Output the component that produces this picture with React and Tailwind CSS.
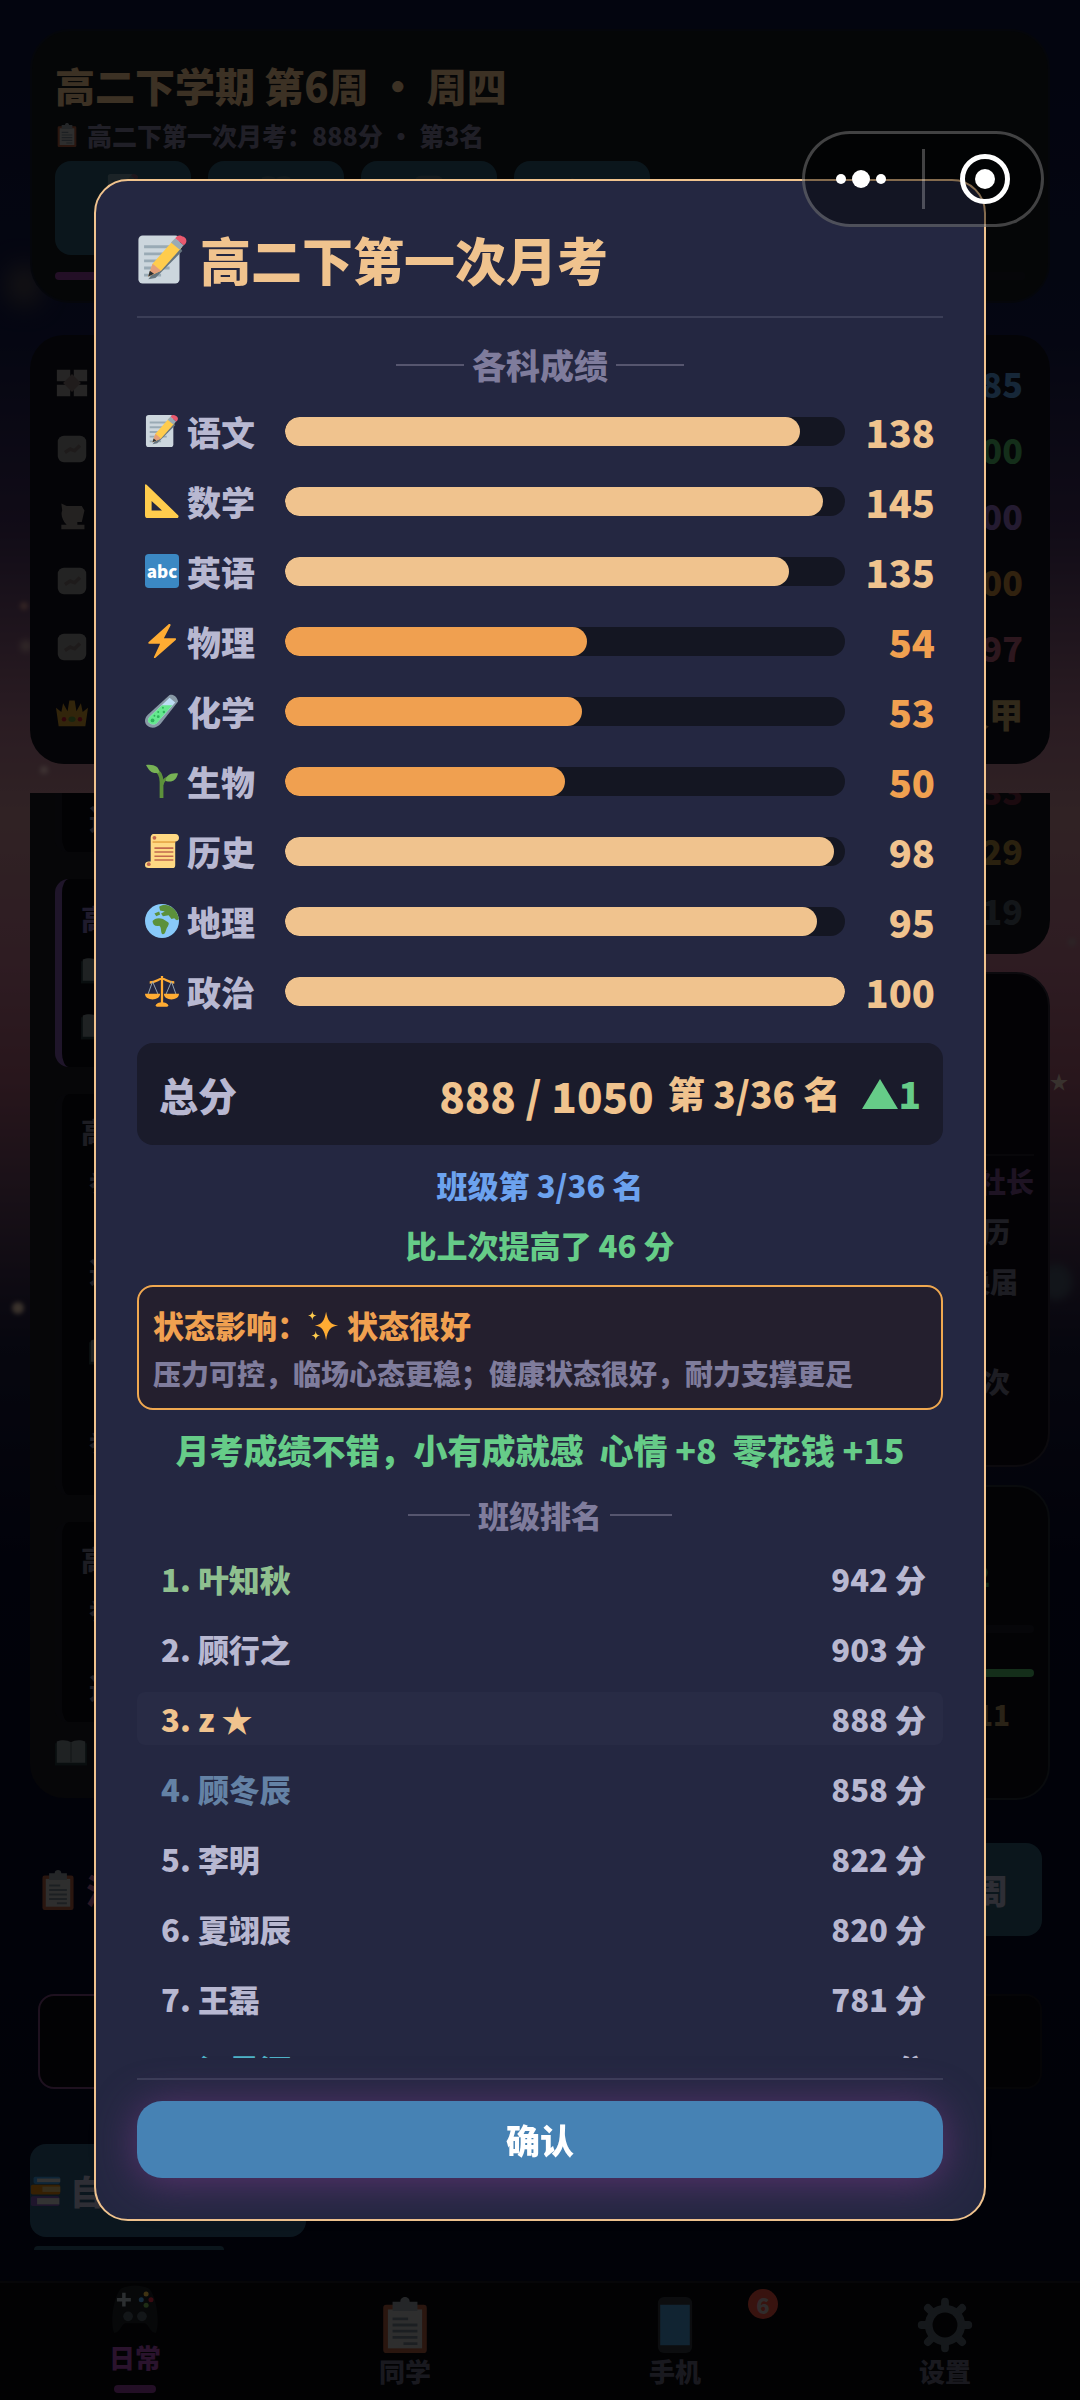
import React from 'react';

const subjects = [
  { icon: 'memo', name: '语文', score: 138, full: 150 },
  { icon: 'ruler', name: '数学', score: 145, full: 150 },
  { icon: 'abc', name: '英语', score: 135, full: 150 },
  { icon: 'bolt', name: '物理', score: 54, full: 100 },
  { icon: 'tube', name: '化学', score: 53, full: 100 },
  { icon: 'sprout', name: '生物', score: 50, full: 100 },
  { icon: 'scroll', name: '历史', score: 98, full: 100 },
  { icon: 'globe', name: '地理', score: 95, full: 100 },
  { icon: 'scales', name: '政治', score: 100, full: 100 },
];

const ranking = [
  { name: '叶知秋', score: 942, color: 'text-[#8fc08f]' },
  { name: '顾行之', score: 903, color: 'text-[#b8b8d1]' },
  { name: 'z ★', score: 888, color: 'text-[#f0c38e]', me: true },
  { name: '顾冬辰', score: 858, color: 'text-[#6482a5]' },
  { name: '李明', score: 822, color: 'text-[#b8b8d1]' },
  { name: '夏翊辰', score: 820, color: 'text-[#b8b8d1]' },
  { name: '王磊', score: 781, color: 'text-[#b8b8d1]' },
  { name: '江景河', score: 768, color: 'text-[#4fb3c8]' },
];

const stats = [
  { icon: 'puzzle', value: '85', color: 'text-[#5a9be0]' },
  { icon: 'card', value: '100', color: 'text-[#4fb868]' },
  { icon: 'cup', value: '100', color: 'text-[#8f6cc4]' },
  { icon: 'card', value: '100', color: 'text-[#c4883c]' },
  { icon: 'card', value: '97', color: 'text-[#b45c78]' },
  { icon: 'crown', value: '路人甲', color: 'text-[#c4a468]' },
];

const icons = {
  memo: (
    <>
      <rect x="1" y="1" width="29" height="34" rx="3" fill="#ccd6dd" />
      <path d="M5 9h20M5 14h20M5 19h19M5 24h18M5 29h12" stroke="#99aab5" strokeWidth="2" />
      <path d="M8 32l5-1L32 12l-2-3-19 19z" fill="#66757f" />
      <path d="M8 30l3-9L26 4l6 5-15 17z" fill="#ffcc4d" />
      <path d="M8 30l3-9 6 5z" fill="#e39f7c" />
      <path d="M8 30l1-4 3 2z" fill="#292f33" />
      <path d="M24 6l3-3 6 5-3 3z" fill="#99aab5" />
      <path d="M27 3c2-3 4-2 6-1s3 4 0 6z" fill="#ea596e" />
    </>
  ),
  ruler: <path fillRule="evenodd" fill="#ffcc4d" d="M0 1.500C0 0 1 0 2 1l33 32c1 1 .5 3-1 3H3c-2 0-3-1-3-3zM7 18v10h11z" />,
  abc: (
    <>
      <rect width="36" height="36" rx="4" fill="#3b88c3" />
      <text x="18" y="25" textAnchor="middle" fontSize="18" fill="#fff">abc</text>
    </>
  ),
  bolt: <path d="M26.500 0c-.4-.3-1-.2-1.500.3L4 19c-1 1-.6 2 .5 2H16l-6.500 14c-.4 1 .8 1.500 1.600.7L32.500 17c.8-.9.4-2-.7-2H20L27 1.500c.3-.5 0-1.200-.5-1.500z" fill="#ffac33" />,
  tube: (
    <>
      <path d="M26 1c4-1 8 2 9 7L17 31c-4 5-10 6-14 3S-1 26 3 22z" fill="#8899a6" />
      <path d="M26 4l6 5-18 20c-3 4-6 4-9 2s-2-5 1-8z" fill="#bdddf4" />
      <path d="M18 12l11 0L14 29c-3 4-6 4-9 2s-2-5 1-8z" fill="#66e88f" />
      <g fill="#2cb35a">
        <circle cx="8" cy="28" r="2" /><circle cx="14" cy="24" r="1.500" /><circle cx="14" cy="19" r="1" />
        <circle cx="20" cy="19" r="1.300" /><circle cx="19" cy="14.500" r="1" /><circle cx="10" cy="23" r="1" />
      </g>
    </>
  ),
  sprout: (
    <>
      <path d="M17.500 36V19c0-7-2-11-7-13" fill="none" stroke="#5c913b" strokeWidth="4" />
      <path d="M18 22c1-4 4-7 8-8" fill="none" stroke="#5c913b" strokeWidth="3" />
      <path d="M1 1c9-1 14 2 14 8-7 2-10-1-14-8z" fill="#77b255" />
      <path d="M35 10c-9-1-13 3-13 8 7 2 11-1 13-8z" fill="#77b255" />
    </>
  ),
  scroll: (
    <>
      <path d="M9 0h23c3 0 4 2 4 4s-1 4-4 4v25c0 2-1 3-3 3H4c-3 0-4-1-4-3.500S2 29 4 29h2V4c0-2 1-4 3-4z" fill="#ffd983" />
      <path d="M8 8.500h24" stroke="#e39f3d" strokeWidth="1.500" />
      <circle cx="10" cy="4" r="2" fill="#c1694f" />
      <circle cx="4" cy="32" r="2" fill="#c1694f" />
      <path d="M10 15h20M10 19h20M10 23.500h20M10 27.500h20" stroke="#c1694f" strokeWidth="1.700" />
    </>
  ),
  globe: (
    <>
      <circle cx="18" cy="18" r="18" fill="#88c9f9" />
      <path d="M8 18c2-3 7-4 11-2l5 3c2 1 1 3 0 5-2 2-2 8-5 8s-1-8-4-9c-4 1-7-1-7-5zM15 3c3-3 8-2 11-1 6 3 9 8 10 14-2 2-3 1-5-1l-3 1-3-4-6 1-2-3 4-2-5-1zM10 10l5-2 1 3-4 2z" fill="#5c913b" />
    </>
  ),
  scales: (
    <>
      <path d="M18 2v31M12 33.500h12M5 9c7 0 9-4 13-4s6 4 13 4" stroke="#ffac33" strokeWidth="2.400" fill="none" />
      <path d="M8 8L3 22M8 8l6 14M28 8l-6 14M28 8l5 14" stroke="#99aab5" strokeWidth="1" />
      <path d="M0 21h16c0 4-4 6-8 6s-8-2-8-6zM20 21h16c0 4-4 6-8 6s-8-2-8-6zM11 34c1-3 4-4 7-4s6 1 7 4z" fill="#ffac33" />
    </>
  ),
  sparkles: (
    <>
      <path d="M21 2c2 11 5 15 14 16-9 1-12 5-14 17-2-12-5-16-13-17 8-1 11-5 13-16z" fill="#ffac33" />
      <path d="M5 1c.5 4 1.500 5 5 5.500-3.500.5-4.500 2-5 5.500-.5-3.500-1.500-5-5-5.500C3.500 6 4.500 5 5 1zM9 24c.5 4 1.500 5 5 5.500-3.500.5-4.500 2-5 5.500-.5-3.500-1.500-5-5-5.500 3.500-.5 4.500-1.500 5-5.500z" fill="#ffcc4d" />
    </>
  ),
  clipboard: (
    <>
      <rect x="4" y="5" width="28" height="31" rx="2" fill="#a8583c" />
      <rect x="7" y="8" width="22" height="25" fill="#b8b8b8" />
      <path d="M10 3h5c0-4 6-4 6 0h5v6H10z" fill="#90989f" />
      <path d="M10 14h10M10 18h16M10 22h16M10 26h16M17 30h9" stroke="#707c88" strokeWidth="1.800" />
    </>
  ),
  gamepad: (
    <>
      <path d="M3 36c-3-6-1-26 5-32 6-3 14-3 20 0 6 6 8 26 5 32-4 0-5-6-8-7H11c-3 1-4 7-8 7z" fill="#1c2024" />
      <path d="M10 7v10M5 12h10" stroke="#b0bcc4" strokeWidth="2.500" />
      <circle cx="13" cy="24" r="3.500" fill="#4c5862" />
      <circle cx="23" cy="24" r="3.500" fill="#4c5862" />
      <circle cx="26" cy="8" r="1.800" fill="#ffcc4d" /><circle cx="22.500" cy="12" r="1.800" fill="#55acee" />
      <circle cx="29.500" cy="12" r="1.800" fill="#dd2e44" /><circle cx="26" cy="16" r="1.800" fill="#77b255" />
    </>
  ),
  phone: (
    <>
      <rect x="7" y="0" width="22" height="36" rx="4" fill="#31373d" />
      <rect x="8.500" y="5" width="19" height="26" fill="#4690c8" />
    </>
  ),
  gear: (
    <>
      <g stroke="#55626c" strokeWidth="5" strokeLinecap="round">
        <path d="M18 3v30M3 18h30M7 7l22 22M29 7L7 29" />
      </g>
      <circle cx="18" cy="18" r="13" fill="#55626c" />
      <circle cx="18" cy="18" r="8" fill="#08080e" />
    </>
  ),
  books: (
    <>
      <rect x="4" y="2" width="30" height="8" rx="2" fill="#3b94d9" /><path d="M8 4h26v4H8z" fill="#ccc" />
      <rect x="1" y="11" width="33" height="11" rx="2" fill="#d8800c" /><path d="M14 13h20v6H14z" fill="#d8b870" />
      <rect x="1" y="24" width="32" height="11" rx="2" fill="#7c56b0" /><path d="M8 26h25v7H8z" fill="#ccc" />
    </>
  ),
  book: (
    <>
      <path d="M0 7h36v25H0z" fill="#24383c" />
      <path d="M2 5c5-2 12-2 16 1 4-3 11-3 16-1v24H2z" fill="#7c868c" />
      <path d="M18 6v23" stroke="#5c686e" strokeWidth="2" />
    </>
  ),
  crown: (
    <>
      <path d="M3 33L0 12l6 5 2-10 5 9 2-12h6l2 12 5-9 2 10 6-5-3 21z" fill="#c8922c" />
      <ellipse cx="18" cy="25" rx="4" ry="3" fill="#5c913b" />
      <circle cx="9" cy="25" r="2.500" fill="#be1931" /><circle cx="27" cy="25" r="2.500" fill="#be1931" />
    </>
  ),
  puzzle: (
    <>
      <path d="M1 3h15v13H1zM20 3h15v13H20zM1 20h15v13H1zM20 20h15v13H20z" fill="#989494" />
      <path d="M8 18L18 8l10 10-10 10z" fill="#807070" />
    </>
  ),
  card: (
    <>
      <rect x="2" y="3" width="32" height="30" rx="7" fill="#8c8c8c" />
      <path d="M10 22l6-4 5 2 6-6" stroke="#786c6c" strokeWidth="4" fill="none" />
    </>
  ),
  cup: <path d="M6 5l6 3h17l3 5-3 13h-5v3h8v5H6v-5h6c-5-5-7-12-5-16z" fill="#908884" />,
};

const Icon = ({ name, className }) => (
  <svg viewBox="0 0 36 36" className={className} aria-hidden="true">{icons[name]}</svg>
);

const SectionTitle = ({ children, className, line }) => (
  <h2 className={`flex items-center justify-center gap-2 text-[#7f7c9c] leading-[50px] ${className}`}>
    <span className={`h-0.5 bg-[#56566f] ${line}`}></span>
    {children}
    <span className={`h-0.5 bg-[#56566f] ${line}`}></span>
  </h2>
);

const TimelineItem = ({ active, children, className }) => (
  <div className={`flex flex-col rounded-[14px] border-l-[7px] bg-[#0a0a10] pl-[19px] text-[28px] text-[#75758a] ${active ? 'border-[#7d55a8]' : 'border-[#1b1b27]'} ${className}`}>
    {children}
  </div>
);

// night sky lights behind the cards
const Stars = () => (
  <div aria-hidden="true">
    <span className="absolute top-[265px] left-2 h-10 w-8 rounded-full bg-[#585050] blur-md"></span>
    <span className="absolute top-[602px] left-5 h-2 w-2 rounded-full bg-[#c88c8c] blur-[2px]"></span>
    <span className="absolute top-[640px] left-5 h-3 w-3 rounded-full bg-[#c09c9c] blur-[3px]"></span>
    <span className="absolute top-[766px] left-10 h-2 w-2 rounded-full bg-[#f0c8c8] blur-[2px]"></span>
    <span className="absolute top-[1302px] left-3 h-3 w-3 rounded-full bg-[#e8c8b0] blur-[2px]"></span>
    <span className="absolute top-[938px] right-1 h-2 w-2 rounded-full bg-[#b09098] blur-[2px]"></span>
    <span className="absolute top-[1072px] right-3 text-[18px] leading-none text-[#e0c8b8]">★</span>
    <span className="absolute top-[1264px] right-2 h-9 w-8 rounded-full bg-[#485468] blur-[4px]"></span>
  </div>
);

const Home = () => (
  <div className="relative flex min-h-screen flex-col bg-[linear-gradient(180deg,#0c143c_0%,#141a48_14%,#44305c_22%,#a87088_30%,#c08890_34%,#b87088_40%,#a05870_45%,#60405c_50%,#1c1c3c_56%,#040828_66%,#060820_100%)]">
    <Stars />
    <div className="relative flex flex-1 flex-col px-[30px] pt-[29px]">
      <header className="flex h-[274px] flex-col rounded-[40px] border-2 border-[#141a2c] bg-[#14181f] px-[23px] pt-6">
        <h1 className="text-[40px] leading-[60px] text-[#f0c38e]">高二下学期 第6周 ・ 周四</h1>
        <p className="flex items-center gap-2 text-[25px] leading-[40px] text-[#7f7c9c]">
          <Icon name="clipboard" className="h-6 w-6" />
          高二下第一次月考：888分 ・ 第3名
        </p>
        <div className="mt-1.5 flex gap-[17px]">
          {['memo', 'book', 'card', 'cup'].map((name) => (
            <button key={name} className="flex h-[94px] w-[136px] justify-center rounded-2xl bg-[#2c5a70] pt-3">
              <Icon name={name} className="h-8 w-8 opacity-40" />
            </button>
          ))}
        </div>
        <div className="mt-[17px] h-2 rounded-full bg-[#1b1b27]">
          <div className="h-2 w-2/5 rounded-full bg-[#8c3c96]"></div>
        </div>
      </header>

      <section className="mt-8 rounded-[34px] bg-[#12121c] pt-[15px] pr-[27px] pb-[18px] pl-[26px]">
        {stats.map((stat, i) => (
          <div key={i} className={`flex h-[66px] items-center justify-between text-[34px] ${stat.color}`}>
            <Icon name={stat.icon} className="h-8 w-8" />
            {stat.value}
          </div>
        ))}
      </section>

      <main className="mt-[29px] flex-1">
        <div className="grid grid-cols-2 items-start gap-4">
          <div className="flex flex-col gap-[27px] rounded-b-[34px] bg-[#181821] px-[25px] pb-[29px]">
            <TimelineItem className="h-[59px] rounded-t-none leading-[50px]"><p className="pl-2">选择了自习</p></TimelineItem>
            <TimelineItem active className="h-[188px] pt-[14px] leading-[50px]">
              <p className="text-[#7d6cb4]">高二下学期</p>
              <Icon name="book" className="my-3 h-8 w-8" />
              <Icon name="book" className="my-3 h-8 w-8" />
            </TimelineItem>
            <TimelineItem className="h-[401px] pt-3 leading-[50px]">
              <p>高二下学期</p>
              <p className="pl-2">参加活动</p>
              <p className="mt-10 pl-2">选择复习</p>
              <Icon name="book" className="mt-10 ml-2 h-8 w-8" />
              <p className="mt-12 pl-2">参加社团</p>
            </TimelineItem>
            <TimelineItem className="h-[200px] pt-3 leading-[50px]">
              <p>高二下学期</p>
              <p className="pl-2">参加活动</p>
              <p className="mt-7 pl-2">选择复习</p>
            </TimelineItem>
            <Icon name="book" className="-mt-3 h-8 w-8" />
          </div>

          <div className="flex flex-col gap-[18px] text-right text-[28px] text-[#75758a]">
            <section className="h-[161px] overflow-hidden rounded-b-[34px] bg-[#15151f] pr-[27px] text-[34px] leading-[60px]">
              <p className="-mt-8 text-[#6e283c]">33</p>
              <p className="text-[#a8843c]">29</p>
              <p className="text-[#4c5864]">19</p>
            </section>
            <section className="h-[495px] rounded-[34px] border-2 border-[#302a3a] bg-[#0e0a14] pt-[180px] pr-3.5 leading-[50px]">
              <div className="h-0.5 bg-[#221c28]"></div>
              <p className="text-[#784c8c]">副社长</p>
              <p className="pr-6">经历</p>
              <p className="pr-4">换届</p>
              <p className="mt-[50px] pr-6">一次</p>
            </section>
            <section className="h-[315px] rounded-[34px] border-2 border-[#242c36] bg-[#0c0e16] pt-[63px] pr-3.5">
              <p className="pr-11 leading-[50px] text-[#3c9c64]">2</p>
              <div className="mt-[25px] h-2 rounded-full bg-[#181a24]"></div>
              <div className="mt-9 h-2 rounded-full bg-[#4fb868]"></div>
              <p className="mt-4 pr-6 text-[#a88c5c]">11</p>
            </section>
          </div>
        </div>

        <div className="mt-[43px] flex items-center justify-between pr-2 pl-2">
          <p className="flex items-center gap-2 text-[34px] text-[#a85c8c]"><Icon name="clipboard" className="h-10 w-10" />活动安排</p>
          <button className="h-[93px] rounded-2xl bg-[#2c5a70] px-[34px] text-[34px] text-[#b8b8d1]">进入下一周</button>
        </div>
        <div className="mt-[58px] grid grid-cols-2 gap-4 px-2">
          <div className="h-[95px] rounded-2xl border-2 border-[#78447c] bg-[#0a0a10]"></div>
          <div className="h-[95px] rounded-2xl border-2 border-[#14141e] bg-[#0a0a10]"></div>
        </div>
        <button className="mt-[55px] flex h-[93px] w-[276px] items-center gap-2 rounded-2xl bg-[#2c5a78] text-[34px] text-[#b8b8d1]">
          <Icon name="books" className="h-8 w-8" />自习室
        </button>
        <div className="mt-[9px] ml-1 h-1 w-[190px] rounded-t-full bg-[#2c5a70]"></div>
      </main>
    </div>

    <nav className="relative mt-7 grid h-[119px] grid-cols-4 border-t-2 border-[#181822] bg-[#08080e] text-[26px] leading-[36px] text-[#66667c]">
      <a href="#daily" className="flex flex-col items-center text-[#a84cb4]">
        <Icon name="gamepad" className="mb-1.5 h-[50px] w-[56px]" />
        日常
        <span className="mt-2.5 h-2 w-[42px] rounded-full bg-[#8c3c96]"></span>
      </a>
      <a href="#classmates" className="flex flex-col items-center pt-[14px]">
        <Icon name="clipboard" className="h-14 w-14" />同学
      </a>
      <a href="#phone" className="relative flex flex-col items-center pt-[14px]">
        <Icon name="phone" className="h-14 w-14" />手机
        <span className="absolute top-1.5 right-8 h-[30px] w-[30px] rounded-full bg-[#e04c3c] text-center text-[22px] leading-[30px] text-[#c0b0b0]">6</span>
      </a>
      <a href="#settings" className="flex flex-col items-center pt-[14px]">
        <Icon name="gear" className="h-14 w-14" />设置
      </a>
    </nav>
  </div>
);

const ExamDialog = () => (
  <div className="fixed inset-0 flex items-center justify-center bg-black/75 px-[94px] py-[179px]">
    <div role="dialog" aria-labelledby="exam-title" className="flex max-h-full w-full flex-col rounded-[34px] border-2 border-[#f0c38e] bg-[#242741] p-[41px]">
      <h1 id="exam-title" className="flex items-center gap-3 border-b-2 border-[#3b3e57] pb-5 text-[51px] leading-[74px] text-[#f0c38e]">
        <Icon name="memo" className="h-[51px] w-[51px]" />
        高二下第一次月考
      </h1>

      <div className="min-h-0 flex-1 overflow-hidden">
        <SectionTitle className="mt-[22px] text-[34px]" line="w-[68px]">各科成绩</SectionTitle>
        <div className="mt-1.5">
          {subjects.map(({ icon, name, score, full }) => {
            const percent = Math.floor((score / full) * 100);
            const good = percent >= 60;
            return (
              <div key={name} className="flex h-[70px] items-center">
                <div className="flex w-[148px] items-center gap-2 pl-2 text-[34px] text-[#b8b8d1]">
                  <Icon name={icon} className="h-[34px] w-[34px]" />
                  {name}
                </div>
                <div className="h-[29px] flex-1 overflow-hidden rounded-full bg-[#141622]">
                  <div className={`h-full rounded-full ${good ? 'bg-[#f0c38e]' : 'bg-[#f0a050]'}`} style={{ width: `${percent}%` }}></div>
                </div>
                <div className={`w-[98px] pr-2 text-right text-[38px] ${good ? 'text-[#f0c38e]' : 'text-[#f0a050]'}`}>{score}</div>
              </div>
            );
          })}
        </div>

        <div className="mt-[17px] flex h-[102px] items-center justify-between rounded-2xl bg-[#1a1b2b] px-[22px]">
          <span className="text-[39px] text-[#b8b8d1]">总分</span>
          <div className="flex items-center text-[#f0c38e]">
            <span className="text-[42px]">888 / 1050</span>
            <span className="ml-3.5 text-[37px]">第 3/36 名</span>
            <span className="ml-[22px] flex items-center text-[37px] text-[#66cc88]">
              <svg viewBox="0 0 36 30" className="h-[30px] w-9" aria-hidden="true"><path d="M18 0l18 30H0z" fill="currentColor" /></svg>
              1
            </span>
          </div>
        </div>

        <div className="mt-2.5 text-center text-[31px] leading-[60px]">
          <p className="text-[#6ca2ee]">班级第 3/36 名</p>
          <p className="text-[#66cc88]">比上次提高了 46 分</p>
        </div>

        <div className="mt-2.5 rounded-2xl border-2 border-[#f0a850] bg-[#241f2e] px-3.5 pt-3.5 pb-[11px] leading-[48px]">
          <p className="flex items-center text-[31px] text-[#f0a050]">
            状态影响：
            <Icon name="sparkles" className="mr-2 h-[31px] w-[31px]" />
            状态很好
          </p>
          <p className="text-[28px] text-[#7f7c9c]">压力可控，临场心态更稳；健康状态很好，耐力支撑更足</p>
        </div>

        <p className="mt-2.5 flex justify-center gap-4 text-[34px] leading-[60px] text-[#66cc88]">
          <span>月考成绩不错，小有成就感</span>
          <span>心情 +8</span>
          <span>零花钱 +15</span>
        </p>

        <SectionTitle className="mt-2.5 text-[31px]" line="w-[62px]">班级排名</SectionTitle>
        <ol className="mt-3 flex flex-col gap-[17px] text-[31px] leading-[53px]">
          {ranking.map(({ name, score, color, me }, i) => (
            <li key={name} className={`flex justify-between rounded-lg pr-[17px] pl-6 ${me ? 'bg-[#282b45]' : ''}`}>
              <span className={color}>{i + 1}. {name}</span>
              <span className="text-[#b8b8d1]">{score} 分</span>
            </li>
          ))}
        </ol>
      </div>

      <div className="mt-5 border-t-2 border-[#3b3e57] pt-[21px]">
        <button className="h-[77px] w-full rounded-[25px] bg-[#4682b4] text-[34px] text-white shadow-[0_4px_40px_#5a3470]">确认</button>
      </div>
    </div>
  </div>
);

// mini program menu, stays above every layer
const Capsule = () => (
  <div className="fixed top-[131px] right-9 flex h-24 w-[242px] items-center justify-between rounded-full border-[3px] border-white/25 bg-black/45 px-[30px]">
    <button aria-label="更多">
      <svg viewBox="0 0 52 20" className="h-5 w-[52px]" fill="#fff"><circle cx="6" cy="10" r="5" /><circle cx="26" cy="10" r="9" /><circle cx="46" cy="10" r="5" /></svg>
    </button>
    <span className="h-[60px] w-[3px] bg-white/25"></span>
    <button aria-label="关闭">
      <svg viewBox="0 0 52 52" className="h-[52px] w-[52px]"><circle cx="26" cy="26" r="22.500" fill="none" stroke="#fff" strokeWidth="5" /><circle cx="26" cy="26" r="10" fill="#fff" /></svg>
    </button>
  </div>
);

const App = () => (
  <div className="relative font-['Noto_Sans_CJK_SC',sans-serif] font-black">
    <Home />
    <ExamDialog />
    <Capsule />
  </div>
);

export default App;
